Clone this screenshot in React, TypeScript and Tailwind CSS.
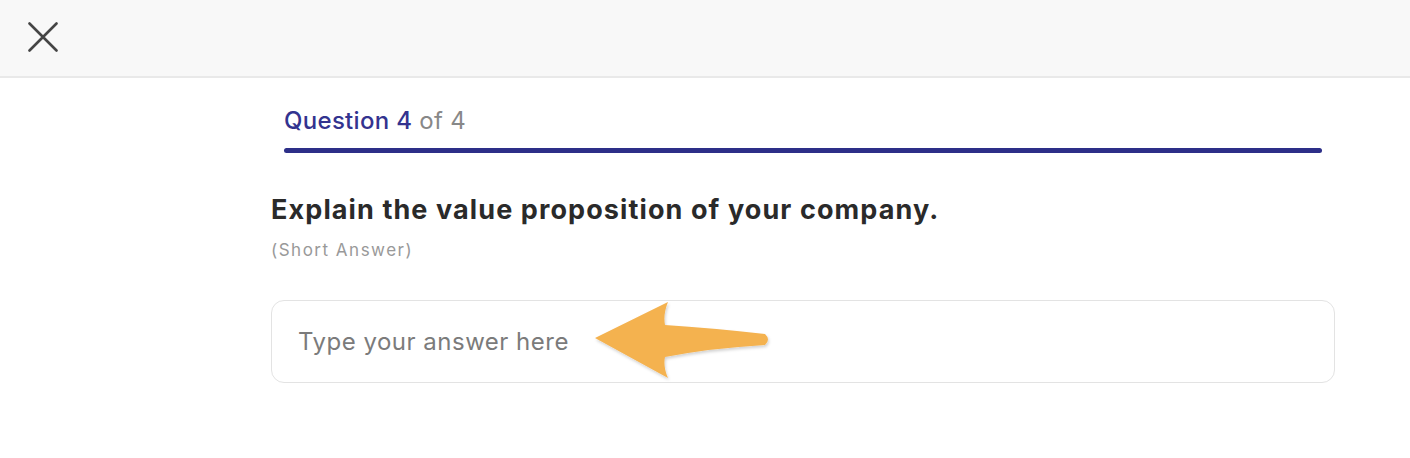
import { useState } from 'react';

const FONT = 'font-["Inter","Liberation_Sans",sans-serif]';

function CloseIcon() {
  return (
    <svg width="30" height="30" viewBox="0 0 30 30" aria-hidden="true">
      <path d="M1.5 1.5L28.5 28.5M28.5 1.5L1.5 28.5" stroke="#454545" strokeWidth="2.6" strokeLinecap="round" />
    </svg>
  );
}

// the orange callout arrow pointing at the placeholder
function CalloutArrow() {
  return (
    <svg
      className="pointer-events-none absolute left-[319px] top-[-2px]"
      width="186"
      height="86"
      viewBox="0 0 186 86"
      aria-hidden="true"
    >
      <defs>
        <filter id="arrowShadow" x="-10%" y="-10%" width="120%" height="130%">
          <feDropShadow dx="1" dy="2" stdDeviation="1.5" floodColor="#000" floodOpacity="0.18" />
        </filter>
      </defs>
      <path
        d="M5 40 L78 4 Q73 16 75 27 Q122 30 175 36 Q181 41.5 175 47 Q122 50 75 59 Q73 69 78 80 Z"
        fill="#f4b250"
        filter="url(#arrowShadow)"
      />
    </svg>
  );
}

export default function App() {
  const [answer, setAnswer] = useState('');

  return (
    <div className={`min-h-[458px] w-full bg-white ${FONT}`}>
      <header className="flex h-[78px] items-center border-b-2 border-[#e9e9e9] bg-[#f8f8f8] pl-[28px]">
        <button type="button" className="-mt-[2px] flex h-[30px] w-[30px] items-center justify-center" aria-label="Close">
          <CloseIcon />
        </button>
      </header>

      <main className="ml-[271px] w-[1064px]">
        {/* Progress */}
        <div className="px-[13px] pt-[28px]">
          <p className="text-[24px] leading-[30px] tracking-[0.3px] text-[#888]">
            <span className="font-medium text-[#33338f]">Question 4</span> of 4
          </p>
          <div className="mt-[12px] h-[5px] w-full rounded-full bg-[#2d2f88]" />
        </div>

        {/* Question */}
        <h2 className="mt-[40px] text-[27px] font-bold leading-[34px] tracking-[1.1px] text-[#2a2a2a]">
          Explain the value proposition of your company.
        </h2>
        <p className="mt-[13px] text-[17px] leading-[20px] tracking-[1.5px] text-[#999]">(Short Answer)</p>

        <div className="relative mt-[40px]">
          <input
            value={answer}
            onChange={(e) => setAnswer(e.target.value)}
            placeholder="Type your answer here"
            className="h-[83px] w-full rounded-[13px] border-[1.5px] border-[#e3e3e3] bg-white px-[26px] text-[24px] tracking-[0.5px] text-[#333] outline-none placeholder:text-[#7b7b7b]"
          />
          <CalloutArrow />
        </div>
      </main>
    </div>
  );
}
